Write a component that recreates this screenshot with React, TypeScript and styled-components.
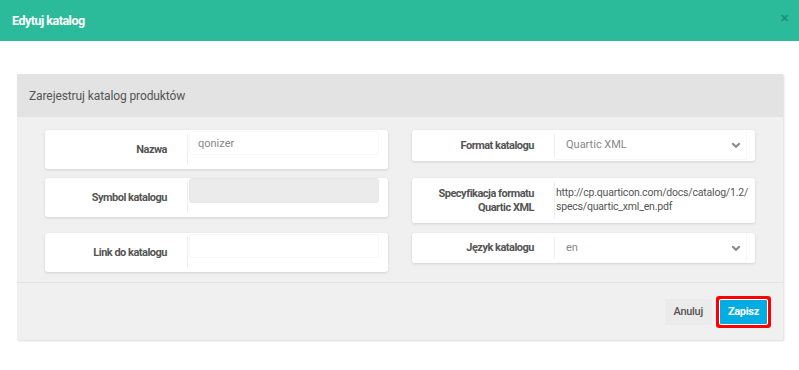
import styled, { createGlobalStyle } from "styled-components";

const GlobalStyle = createGlobalStyle`
  body {
    margin: 0;
    background: #fff;
    font-family: Roboto, "Noto Sans", "Liberation Sans", sans-serif;
  }
`;

const Modal = styled.div`
  width: 799px;
  height: 370px;
  background: #fff;
`;

const TopBar = styled.div`
  height: 41px;
  background: #2bbb9b;
  display: flex;
  align-items: center;
  justify-content: space-between;
  padding: 0 12px 0 12px;
  box-sizing: border-box;
`;

const Title = styled.h2`
  margin: 0 0 1px;
  font-size: 12.5px;
  font-weight: 700;
  color: #fff;
  letter-spacing: -0.5px;
`;

const Close = styled.span`
  color: #1a806a;
  font-size: 11px;
  font-weight: 700;
  opacity: 0.75;
  margin-top: -4px;
  margin-right: -2px;
`;

const Content = styled.div`
  padding: 33px 16px 0 17px;
`;

const Panel = styled.div`
  background: #f0f0f0;
  box-shadow: 1px 1px 2px rgba(0, 0, 0, 0.15);
`;

const PanelHead = styled.div`
  height: 43px;
  background: #e3e3e3;
  display: flex;
  align-items: center;
  padding-left: 12px;
  font-size: 12px;
  color: #555;
  letter-spacing: -0.1px;
`;

const PanelBody = styled.div`
  display: grid;
  grid-template-columns: 343px 343px;
  grid-template-rows: 48px 55px 49px;
  column-gap: 24px;
  padding: 13px 28px 0 28px;
  border-bottom: 1px solid #e2e2e2;
`;

const Card = styled.div<{ $h: number; $split: number }>`
  height: ${(p) => p.$h}px;
  background: #fff;
  border-radius: 3px;
  box-shadow: 0 1px 3px rgba(0, 0, 0, 0.13);
  display: grid;
  grid-template-columns: ${(p) => p.$split}px 1fr;
  align-self: start;
`;

const Label = styled.div`
  display: flex;
  align-items: center;
  justify-content: flex-end;
  text-align: right;
  padding-right: 20px;
  margin: 4px 0;
  border-right: 1px solid #eee;
  font-size: 11px;
  font-weight: 700;
  color: #555;
  line-height: 14px;
  letter-spacing: -0.5px;
`;

const Field = styled.div`
  padding: 1px 9px 0 1px;
`;

const TextInput = styled.div<{ $disabled?: boolean }>`
  height: 24px;
  border-radius: 3px;
  border: 1px solid ${(p) => (p.$disabled ? "#e6e6e6" : "#f7f7f7")};
  background: ${(p) => (p.$disabled ? "#ebebeb" : "#fff")};
  box-sizing: border-box;
  padding: 5px 8px;
  font-size: 11px;
  color: #888;
`;

const SelectBox = styled.div`
  height: 29px;
  margin: 0 8px 0 1px;
  display: flex;
  align-items: center;
  justify-content: space-between;
  padding: 0 4px 0 10px;
  border-bottom: 1px solid #f7f7f7;
  border-right: 1px solid #f7f7f7;
  font-size: 11px;
  color: #888;
`;

const StaticText = styled.div`
  padding: 8px 0 0 1px;
  font-size: 10.5px;
  color: #555;
  line-height: 14px;
  letter-spacing: -0.2px;
`;

const Footer = styled.div`
  height: 57px;
  display: flex;
  align-items: center;
  justify-content: flex-end;
  gap: 8px;
  padding-right: 16px;
`;

const Button = styled.button<{ $primary?: boolean }>`
  height: ${(p) => (p.$primary ? 24 : 26)}px;
  padding: 0 ${(p) => (p.$primary ? 8 : 9)}px;
  border: none;
  border-radius: 1px;
  font-family: inherit;
  font-size: 11px;
  font-weight: ${(p) => (p.$primary ? 700 : 500)};
  letter-spacing: -0.3px;
  color: ${(p) => (p.$primary ? "#fff" : "#555")};
  background: ${(p) => (p.$primary ? "#00ade2" : "#ebebeb")};
  box-shadow: ${(p) => (p.$primary ? "0 0 0 1px #fff, 0 0 0 4px #f00" : "none")};
`;

const Chevron = () => (
  <svg width="12" height="12" viewBox="0 0 12 12">
    <path d="M2.3 4.2 6 7.8 9.7 4.2" fill="none" stroke="#888" strokeWidth="2" />
  </svg>
);

export default function App() {
  return (
    <Modal>
      <GlobalStyle />
      <TopBar>
        <Title>Edytuj katalog</Title>
        <Close>✕</Close>
      </TopBar>
      <Content>
        <Panel>
          <PanelHead>Zarejestruj katalog produktów</PanelHead>
          <PanelBody>
            <Card $h={39} $split={143} style={{ gridColumn: 1, gridRow: 1 }}>
              <Label>Nazwa</Label>
              <Field>
                <TextInput>qonizer</TextInput>
              </Field>
            </Card>
            <Card $h={31} $split={143} style={{ gridColumn: 2, gridRow: 1 }}>
              <Label>Format katalogu</Label>
              <SelectBox>
                Quartic XML
                <Chevron />
              </SelectBox>
            </Card>
            <Card $h={39} $split={143} style={{ gridColumn: 1, gridRow: 2 }}>
              <Label>Symbol katalogu</Label>
              <Field style={{ paddingTop: 0 }}>
                <TextInput $disabled style={{ height: 25 }} />
              </Field>
            </Card>
            <Card $h={45} $split={143} style={{ gridColumn: 2, gridRow: 2 }}>
              <Label>
                Specyfikacja formatu
                <br />
                Quartic XML
              </Label>
              <StaticText>
                http://cp.quarticon.com/docs/catalog/1.2/
                <br />
                specs/quartic_xml_en.pdf
              </StaticText>
            </Card>
            <Card $h={39} $split={143} style={{ gridColumn: 1, gridRow: 3 }}>
              <Label>Link do katalogu</Label>
              <Field>
                <TextInput />
              </Field>
            </Card>
            <Card $h={30} $split={143} style={{ gridColumn: 2, gridRow: 3 }}>
              <Label>Język katalogu</Label>
              <SelectBox>
                en
                <Chevron />
              </SelectBox>
            </Card>
          </PanelBody>
          <Footer>
            <Button>Anuluj</Button>
            <Button $primary>Zapisz</Button>
          </Footer>
        </Panel>
      </Content>
    </Modal>
  );
}
